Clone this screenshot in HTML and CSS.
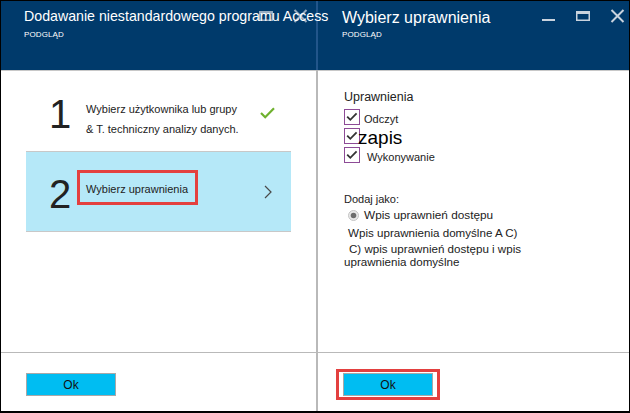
FILE: index.html
```html
<!DOCTYPE html>
<html lang="pl">
<head>
<meta charset="utf-8">
<title>Wybierz uprawnienia</title>
<link rel="stylesheet" href="styles.css">
</head>
<body>
<div class="window">
  <section class="panel panel-left">
    <header class="blade-header header-left">
      <svg class="controls controls-dim" width="86" height="16" viewBox="0 0 86 16" aria-hidden="true">
        <rect x="36" y="2" width="14" height="3" fill="#c9d3de"/>
        <rect x="36.75" y="2.75" width="12.5" height="8.5" fill="none" stroke="#c9d3de" stroke-width="1.5"/>
        <path d="M71.5 1 L83.5 13 M83.5 1 L71.5 13" stroke="#c9d3de" stroke-width="2"/>
      </svg>
      <h1 class="blade-title title-sm">Dodawanie niestandardowego programu Access</h1>
      <div class="blade-sub sub-left">PODGLĄD</div>
    </header>
    <div class="blade-body">
      <ul class="steps">
        <li class="step">
          <span class="step-num">1</span>
          <span class="step-text">Wybierz użytkownika lub grupy<br>&amp; T. techniczny analizy danych.</span>
          <svg class="step-check" width="15" height="12" viewBox="0 0 15 12" aria-hidden="true">
            <path d="M1 6 L5.2 10.2 L14 1.2" fill="none" stroke="#6fb12e" stroke-width="2.2"/>
          </svg>
        </li>
        <li class="step step-active">
          <span class="step-num">2</span>
          <span class="step-focus">Wybierz uprawnienia</span>
          <svg class="step-chevron" width="8" height="14" viewBox="0 0 8 14" aria-hidden="true">
            <path d="M1 1 L7 7 L1 13" fill="none" stroke="#4a4a4a" stroke-width="1.2"/>
          </svg>
        </li>
      </ul>
    </div>
    <footer class="blade-footer footer-left">
      <button class="btn-ok" type="button">Ok</button>
    </footer>
  </section>

  <div class="divider">
    <div class="divider-top"></div>
    <div class="divider-bottom"></div>
  </div>

  <section class="panel panel-right">
    <header class="blade-header header-right">
      <svg class="controls" width="86" height="16" viewBox="0 0 86 16" aria-hidden="true">
        <rect x="2" y="10" width="13" height="2" fill="#c9d3de"/>
        <rect x="36" y="2" width="14" height="3" fill="#c9d3de"/>
        <rect x="36.75" y="2.75" width="12.5" height="8.5" fill="none" stroke="#c9d3de" stroke-width="1.5"/>
        <path d="M71.5 1 L83.5 13 M83.5 1 L71.5 13" stroke="#c9d3de" stroke-width="2"/>
      </svg>
      <h1 class="blade-title title-lg">Wybierz uprawnienia</h1>
      <div class="blade-sub sub-right">PODGLĄD</div>
    </header>
    <div class="blade-body perm-body">
      <div class="perm-heading">Uprawnienia</div>
      <div class="perm-row">
        <svg class="cbox" width="16" height="16" viewBox="0 0 16 16" aria-hidden="true">
          <rect x="0.5" y="0.5" width="15" height="15" fill="#fff" stroke="#8d4b96"/>
          <path d="M3.2 7.6 L6.3 10.8 L12.6 4.3" fill="none" stroke="#333" stroke-width="1.8"/>
        </svg>
        <span class="perm-label label-read">Odczyt</span>
      </div>
      <div class="perm-row">
        <svg class="cbox" width="16" height="16" viewBox="0 0 16 16" aria-hidden="true">
          <rect x="0.5" y="0.5" width="15" height="15" fill="#fff" stroke="#8d4b96"/>
          <path d="M3.2 7.6 L6.3 10.8 L12.6 4.3" fill="none" stroke="#333" stroke-width="1.8"/>
        </svg>
        <span class="perm-label label-write">zapis</span>
      </div>
      <div class="perm-row">
        <svg class="cbox" width="16" height="16" viewBox="0 0 16 16" aria-hidden="true">
          <rect x="0.5" y="0.5" width="15" height="15" fill="#fff" stroke="#8d4b96"/>
          <path d="M3.2 7.6 L6.3 10.8 L12.6 4.3" fill="none" stroke="#333" stroke-width="1.8"/>
        </svg>
        <span class="perm-label label-exec">Wykonywanie</span>
      </div>

      <div class="add-as">Dodaj jako:</div>
      <div class="radio-row">
        <svg class="radio" width="11" height="11" viewBox="0 0 11 11" aria-hidden="true">
          <circle cx="5.5" cy="5.5" r="5" fill="#e9e9e9" stroke="#c4c4c4"/>
          <circle cx="5.5" cy="5.5" r="2.8" fill="#6d6d6d"/>
        </svg>
        <span class="radio-label">Wpis uprawnień dostępu</span>
      </div>
      <div class="opt-line">Wpis uprawnienia domyślne A C)</div>
      <div class="opt-para">C) wpis uprawnień dostępu i wpis<br>uprawnienia domyślne</div>
    </div>
    <footer class="blade-footer footer-right">
      <div class="focus-ring">
        <button class="btn-ok" type="button">Ok</button>
      </div>
    </footer>
  </section>
</div>
</body>
</html>
```

FILE: styles.css
```css
* { box-sizing: border-box; }

body {
  margin: 0;
  background: #fff;
  font-family: "Liberation Sans", Arial, sans-serif;
  color: #222;
}

.window {
  display: flex;
  width: 630px;
  height: 413px;
  border: 1px solid #000;
  border-bottom-width: 2px;
  overflow: hidden;
}

.panel {
  display: flex;
  flex-direction: column;
}

.panel-left { width: 315px; flex: none; }
.panel-right { flex: 1; min-width: 0; }

.divider {
  width: 2px;
  flex: none;
  display: flex;
  flex-direction: column;
}
.divider-top { height: 69px; background: #22558a; }
.divider-bottom { flex: 1; background: #b9b9b9; }

/* header */
.blade-header {
  position: relative;
  flex: none;
  height: 70px;
  background: #003a6b;
  border-bottom: 1px solid #c8c8c8;
  color: #fff;
}
.header-left { padding: 7px 0 0 23px; }
.header-right { padding: 8px 0 0 24px; }

.controls {
  position: absolute;
  left: 222px;
  top: 8px;
  z-index: 1;
}
.controls-dim { opacity: 0.75; }

.blade-title {
  position: relative;
  z-index: 2;
  margin: 0;
  font-weight: normal;
  white-space: nowrap;
}
.title-sm { font-size: 14.2px; line-height: 17px; }
.title-lg { font-size: 16px; line-height: 18px; }

.blade-sub {
  font-size: 8px;
  line-height: 10px;
  letter-spacing: 0.1px;
}
.sub-left { margin-top: 5px; }
.sub-right { margin-top: 3px; }

/* body */
.blade-body {
  flex: 1;
  min-height: 0;
}

.steps {
  list-style: none;
  margin: 0 25px;
  padding: 0;
}

.step {
  display: flex;
  align-items: center;
  height: 81px;
  border-bottom: 1px solid #c8c8c8;
}

.step-active {
  height: 80px;
  background: #b5e8f8;
}

.step-num {
  flex: none;
  width: 51px;
  padding-left: 23px;
  margin-top: 5px;
  font-size: 40px;
  line-height: 40px;
  color: #222;
}

.step-text {
  margin-left: 9px;
  margin-top: 16px;
  font-size: 11px;
  line-height: 20px;
  white-space: nowrap;
}

.step-check {
  margin-left: auto;
  margin-right: 16px;
  margin-top: 4px;
}

.step-focus {
  border: 3px solid #e3403f;
  padding: 10px 7px 6px 6px;
  margin-bottom: 8px;
  font-size: 11px;
  line-height: 13px;
  white-space: nowrap;
}

.step-chevron {
  margin-left: auto;
  margin-right: 19px;
}

/* footer */
.blade-footer {
  flex: none;
  height: 59px;
  border-top: 1px solid #b9b9b9;
}
.footer-left { padding: 20px 0 0 25px; }
.footer-right { padding: 16px 0 0 18px; }

.btn-ok {
  display: block;
  width: 90px;
  height: 23px;
  padding: 0;
  background: #00bdf2;
  border: 1px solid #a8a8a8;
  font-family: "Liberation Sans", Arial, sans-serif;
  font-size: 12px;
  color: #111;
}

.focus-ring {
  width: max-content;
  border: 3px solid #e3403f;
  padding: 1px 4px;
}

/* permissions */
.perm-body {
  padding: 18px 0 0 26px;
}

.perm-heading {
  font-size: 12.5px;
  line-height: 16px;
  margin-bottom: 4px;
}

.perm-row {
  display: flex;
  align-items: flex-start;
  height: 16px;
  margin-bottom: 3px;
}
.perm-row:nth-child(4) { margin-bottom: 0; }

.cbox { flex: none; }

.perm-label {
  margin-top: 2px;
  font-size: 11px;
  line-height: 16px;
  white-space: nowrap;
}
.label-read { margin-left: 4px; }
.label-write {
  margin-left: -2px;
  font-size: 19px;
  color: #000;
  position: relative;
}
.label-exec { margin-left: 7px; }

.add-as {
  margin-top: 28px;
  font-size: 11px;
  line-height: 16px;
}

.radio-row {
  display: flex;
  align-items: center;
  height: 16px;
  font-size: 11.8px;
  line-height: 16px;
}
.radio { margin-left: 4px; flex: none; }
.radio-label { margin-left: 5px; white-space: nowrap; }

.opt-line {
  margin-top: 2px;
  padding-left: 4px;
  font-size: 11.6px;
  line-height: 16px;
  white-space: nowrap;
}

.opt-para {
  margin-top: 1px;
  font-size: 11.6px;
  line-height: 13px;
  text-indent: 5px;
  white-space: nowrap;
}
```
